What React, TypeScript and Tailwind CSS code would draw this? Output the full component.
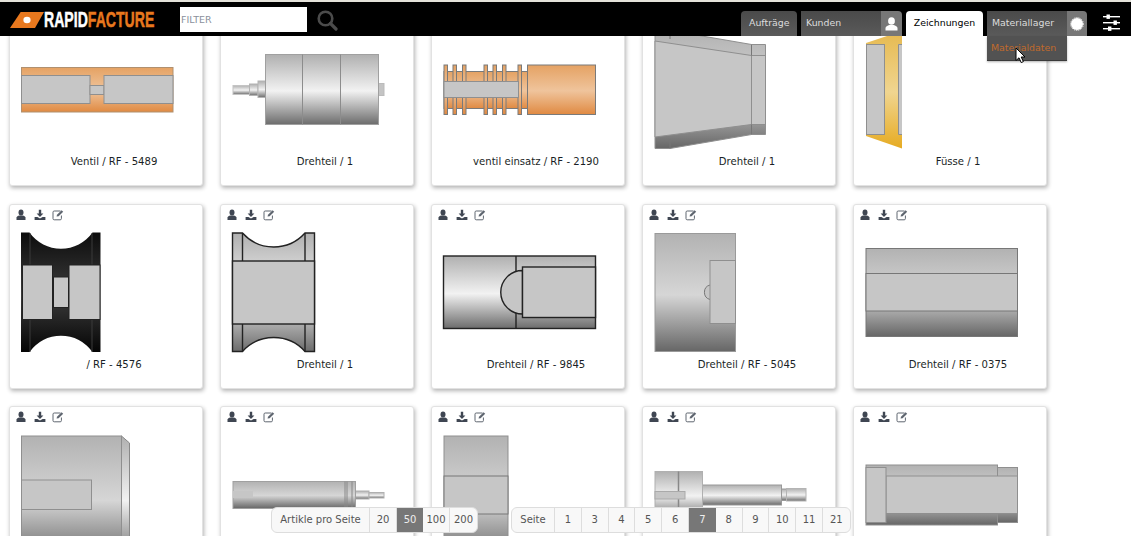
import type { ReactNode } from "react";

const GREY = "#c6c6c6";
const EDGE = "#8f8f8f";
const INK = "#222222";

// Rect by its corners, the drawings below were measured that way
function R({ a, b, c, d, fill = GREY, stroke = EDGE, w = 1 }: { a: number; b: number; c: number; d: number; fill?: string; stroke?: string; w?: number }) {
  return <rect x={a} y={b} width={c - a} height={d - b} fill={fill} stroke={stroke} strokeWidth={w} />;
}

function Defs() {
  const grads: [string, string, string, string][] = [
    ["steel", "#b0b0b0", "#f2f2f2", "#6c6c6c"],
    ["dim", "#b2b2b2", "#d6d6d6", "#666666"],
    ["orange", "#e5a263", "#efc49c", "#e08a42"],
    ["gold", "#e6b94f", "#f0d590", "#e6ab22"],
    ["dark", "#0c0c0c", "#3c3c3c", "#050505"],
  ];
  return (
    <svg className="absolute w-0 h-0">
      <defs>
        {grads.map(([id, top, mid, bottom]) => (
          <linearGradient key={id} id={id} x1="0" y1="0" x2="0" y2="1">
            <stop offset="0" stopColor={top} />
            <stop offset="0.52" stopColor={mid} />
            <stop offset="1" stopColor={bottom} />
          </linearGradient>
        ))}
      </defs>
    </svg>
  );
}

const drawings: ReactNode[] = [
  // row 1
  <g>
    <R a={21.5} b={67.5} c={173} d={112} fill="url(#orange)" stroke="#b0906f" />
    <R a={21.5} b={75.5} c={90} d={103.5} />
    <R a={90} b={85.5} c={104} d={94.5} />
    <R a={104} b={75.5} c={173} d={103.5} />
  </g>,
  <g>
    <R a={233} b={85.5} c={249.5} d={94.5} fill="url(#steel)" stroke="#c4c4c4" />
    <R a={249.5} b={84} c={258} d={95.5} fill="url(#steel)" stroke="#b4b4b4" />
    <R a={258} b={81} c={266} d={97.5} fill="url(#steel)" stroke="#b4b4b4" />
    <R a={377.5} b={83.5} c={384} d={95.5} fill="#c4c4c4" stroke="#bbbbbb" />
    <R a={265.5} b={54.5} c={378.5} d={124.5} fill="url(#steel)" stroke="#a0a0a0" />
    <path d="M302.5 54.5V124.5M340.5 54.5V124.5" stroke="#8c8c8c" fill="none" />
  </g>,
  <g>
    <R a={444} b={71.5} c={527.5} d={108.5} fill="url(#orange)" stroke="#7a7a7a" />
    {[444, 453, 462.5, 484, 493, 502.5, 518].map((x) => (
      <R key={x} a={x} b={65} c={x + 3.5} d={114.5} fill="url(#orange)" stroke="#7a7a7a" />
    ))}
    <R a={444} b={81.5} c={518.5} d={97.5} />
    <R a={527.5} b={65} c={595.5} d={114.5} fill="url(#orange)" stroke="#7a7a7a" />
  </g>,
  <g>
    <path d="M655 30.5H670L751.5 44.5H765.5V134.5H751.5L670 148.5H655Z" fill="url(#dim)" stroke={EDGE} />
    <path d="M655 41L751.5 55.5V124.5L655 137Z" fill={GREY} stroke={EDGE} />
    <R a={751.5} b={55.5} c={765.5} d={124.5} />
    <path d="M670 30.5V39M670 139V148.5M751.5 44.5V55.5M751.5 124.5V134.5" stroke="#777777" fill="none" />
  </g>,
  <g>
    <path d="M866 43L902 31V148.5L866 136Z" fill="url(#gold)" />
    <R a={866.5} b={44.5} c={884.5} d={134.5} />
    <path d="M902 44.5H898.5V134.5H902" fill={GREY} stroke={EDGE} />
  </g>,
  // row 2
  <g>
    <path d="M21 232.5H29.5A38.6 38.6 0 0 0 92.5 232.5H100.5V352H92.5A38.6 38.6 0 0 0 29.5 352H21Z" fill="url(#dark)" />
    <path d="M30 233V352M92 233V352" stroke="#3a3a3a" />
    <R a={22.5} b={265} c={52.5} d={319.5} stroke={INK} />
    <R a={53.5} b={277} c={68.5} d={307.5} stroke={INK} />
    <R a={69} b={265} c={100} d={319.5} stroke={INK} />
  </g>,
  <g>
    <path d="M232.5 233H242.5A42 42 0 0 0 305 233H314.5V351.5H305A42 42 0 0 0 242.5 351.5H232.5Z" fill="url(#steel)" stroke={INK} strokeWidth="1.4" />
    <path d="M242.5 233V351.5M305 233V351.5" stroke={INK} strokeWidth="1.4" />
    <R a={232.5} b={261} c={314.5} d={324} stroke={INK} w={1.4} />
  </g>,
  <g>
    <R a={443.5} b={256} c={595.5} d={328.5} fill="url(#steel)" stroke={INK} w={1.4} />
    <path d="M516 256V328.5" stroke={INK} strokeWidth="1.4" />
    <path d="M522.5 270.5A21.5 21.5 0 0 0 522.5 314Z" fill={GREY} stroke={INK} strokeWidth="1.4" />
    <R a={522.5} b={267} c={595.5} d={317.5} stroke={INK} w={1.4} />
  </g>,
  <g>
    <R a={655} b={233.5} c={735.5} d={351.5} fill="url(#dim)" stroke="#9a9a9a" />
    <path d="M710 285A7.5 7.5 0 0 0 710 299.5" fill={GREY} stroke="#777777" />
    <R a={710} b={260.5} c={735.5} d={323.5} />
  </g>,
  <g>
    <R a={866} b={248.5} c={1017.5} d={336.5} fill="url(#dim)" stroke="#777777" />
    <R a={866} b={273.5} c={1017.5} d={311} stroke="#777777" />
  </g>,
  // row 3
  <g>
    <path d="M121.5 436L129.5 443V560H121.5Z" fill="url(#steel)" stroke="#888888" />
    <R a={21.5} b={436} c={121.5} d={560} fill="url(#dim)" />
    <R a={21.5} b={480} c={91.5} d={509.5} />
  </g>,
  <g>
    <R a={355.5} b={491} c={369} d={499} fill="url(#steel)" stroke="#b0b0b0" />
    <R a={369} b={492.5} c={384} d={498} fill="url(#steel)" stroke="#b0b0b0" />
    <R a={233} b={481.5} c={355.5} d={508.5} fill="url(#dim)" stroke="#a0a0a0" />
    <rect x={233} y={491} width={20} height={7} fill={GREY} />
    <path d="M345 481.5V508.5M347 481.5V508.5M352 481.5V508.5" stroke="#888888" fill="none" />
  </g>,
  <g>
    <R a={444} b={436} c={508} d={560} fill="url(#dim)" />
    <R a={444} b={476} c={508} d={514} stroke="#777777" />
  </g>,
  <g>
    <R a={702.5} b={485} c={781.5} d={505} fill="url(#steel)" stroke="#999999" />
    <R a={781.5} b={489} c={786.5} d={500.5} fill="url(#steel)" stroke="#999999" />
    <R a={786.5} b={488.5} c={806} d={501} fill="url(#steel)" stroke="#b4b4b4" />
    <R a={655} b={471.5} c={702.5} d={518.5} fill="url(#steel)" stroke="#b0b0b0" />
    <path d="M678.5 471.5V518.5" stroke="#888888" strokeWidth="1.5" />
    <R a={655} b={491.5} c={685} d={499} stroke="#aaaaaa" />
  </g>,
  <g>
    <R a={866} b={465} c={997.5} d={525} fill="url(#dim)" />
    <R a={997.5} b={467.5} c={1017.5} d={522.5} fill="url(#dim)" />
    <R a={886} b={476} c={1017.5} d={513.5} />
    <R a={866} b={467.5} c={886} d={522.5} />
  </g>,
];

const labels = [
  "Ventil / RF - 5489",
  "Drehteil / 1",
  "ventil einsatz / RF - 2190",
  "Drehteil / 1",
  "Füsse / 1",
  "/ RF - 4576",
  "Drehteil / 1",
  "Drehteil / RF - 9845",
  "Drehteil / RF - 5045",
  "Drehteil / RF - 0375",
  "",
  "",
  "",
  "",
  "",
];

function CardIcons() {
  return (
    <div className="h-6 flex items-start pt-[4px] pl-[5px] gap-[6.5px]">
      <svg width="12" height="12" viewBox="0 0 12 12" fill="#3f4652">
        <ellipse cx="6" cy="3.4" rx="2.5" ry="3" />
        <path d="M1.5 11V8.6C1.5 7.4 3 6.8 4.3 6.4H7.7C9 6.8 10.5 7.4 10.5 8.6V11Z" />
      </svg>
      <svg width="12" height="12" viewBox="0 0 12 12" fill="#3f4652">
        <path d="M4.8 0.8H7.2V4.5H9.4L6 8L2.6 4.5H4.8Z" />
        <path d="M0.6 8H3.4L6 9.6L8.6 8H11.4V11H0.6Z" />
      </svg>
      <svg width="12" height="12" viewBox="0 0 12 12" fill="none" stroke="#5f6670">
        <path d="M8.5 2H2.2Q1 2 1 3.2V9.6Q1 10.8 2.2 10.8H8.2Q9.4 10.8 9.4 9.6V6.5" />
        <path d="M4.6 7.6L5 5.8L9.6 1.2L11.2 2.8L6.6 7.3Z" fill="#5f6670" stroke="none" />
      </svg>
    </div>
  );
}

function Card({ index }: { index: number }) {
  const x = 9 + (index % 5) * 211;
  const y = [1, 204, 406][Math.floor(index / 5)];
  return (
    <div className="h-[185px] bg-white border border-[#e2e2e2] rounded-[3px] shadow-[1px_2px_4px_rgba(0,0,0,0.3)]">
      <CardIcons />
      <svg width="192" height="128" viewBox="1 25 192 128" className="block">
        <g transform={`translate(${-x} ${-y})`}>{drawings[index]}</g>
      </svg>
      <p className="pt-px pl-4 text-center text-[10.1px] leading-[14px] text-[#1a1f26]">{labels[index]}</p>
    </div>
  );
}

function Logo() {
  return (
    <div className="flex items-center w-[170px] ml-[10px] mt-[2px]">
      <svg width="35" height="16" viewBox="0 0 35 16" className="shrink-0">
        <path d="M0 16L10.7 0H34L25 16Z" fill="#e8781e" />
        <ellipse cx="17" cy="8" rx="3.6" ry="3.2" fill="#ffffff" />
      </svg>
      <span className="block w-[111px] -ml-px origin-left scale-x-[0.64] text-[22px] leading-[16px] font-bold whitespace-nowrap font-['Liberation_Sans',sans-serif] [-webkit-text-stroke:0.5px_currentColor]">
        <span className="text-white">RAPID</span>
        <span className="text-[#e8781e]">FACTURE</span>
      </span>
    </div>
  );
}

function Tab({ label, className }: { label: string; className: string }) {
  return (
    <div className={`h-[25px] flex items-center pl-[5px] rounded-tl-[4px] bg-gradient-to-b from-[#4a4a4a] to-[#5a5a5a] text-[#dddddd] ${className}`}>
      {label}
    </div>
  );
}

function Navbar() {
  return (
    <header className="relative z-10">
      <div className="h-[2px] bg-[#e4e2da]" />
      <div className="h-[34px] bg-black flex items-end text-[9.4px]">
        <div className="self-center flex items-center">
          <Logo />
          <input
            placeholder="FILTER"
            className="w-[127px] h-[25px] bg-white pl-px text-[9.5px] placeholder:text-[#8a909c] outline-none"
          />
          <svg width="22" height="22" viewBox="0 0 22 22" fill="none" stroke="#4b4b4b" className="ml-[9px] mt-[2px]">
            <circle cx="9.5" cy="9.5" r="6.8" strokeWidth="2.6" />
            <path d="M14.5 14.5L20 20" strokeWidth="3.2" strokeLinecap="round" />
          </svg>
        </div>
        <div className="ml-auto flex items-end">
          <Tab label="Aufträge" className="w-[56px] pl-[8px] rounded-tr-[4px] mr-[4px]" />
          <Tab label="Kunden" className="w-[80px] pl-[4px] rounded-tl-none" />
          <div className="h-[25px] w-[21px] mr-[4px] bg-[#777777] rounded-tr-[4px] flex items-center justify-center">
            <svg width="13" height="14" viewBox="0 0 13 14" fill="#ffffff">
              <ellipse cx="6.5" cy="4" rx="3.4" ry="3.8" />
              <path d="M0.5 13.5V11C0.5 9.5 2.6 8.6 4.3 8H8.7C10.4 8.6 12.5 9.5 12.5 11V13.5Z" />
            </svg>
          </div>
          <div className="h-[25px] w-[77px] mr-[4px] bg-white text-black rounded-t-[4px] flex items-center justify-center">
            Zeichnungen
          </div>
          <div className="relative">
            <Tab label="Materiallager" className="w-[80px] pl-[4px] rounded-tl-none" />
            <div className="absolute left-0 top-[25px] w-[80px] h-[25px] pl-[4px] bg-[#525252] border-b border-[#3a3a3a] shadow-[0_1px_2px_rgba(0,0,0,0.3)] text-[#c06a2c] flex items-center">
              Materialdaten
            </div>
            <svg width="12" height="17" viewBox="0 0 12 17" className="absolute left-[28px] top-[36px]">
              <path d="M1 1V13.5L4 10.8L6.2 15.6L8.4 14.6L6.2 10H10Z" fill="#ffffff" stroke="#000000" strokeWidth="1" />
            </svg>
          </div>
          <div className="h-[25px] w-[20px] bg-[#777777] rounded-tr-[4px] flex items-center justify-center">
            <svg width="16" height="16" viewBox="0 0 16 16">
              <circle cx="8" cy="8" r="6" fill="#ffffff" />
              <circle cx="8" cy="8" r="6.4" fill="none" stroke="#ffffff" strokeWidth="1" strokeDasharray="1 1" />
            </svg>
          </div>
          <svg width="18" height="17" viewBox="0 0 18 17" fill="#ffffff" className="ml-[16px] mr-[10px] mb-[5px]">
            <rect x="0" y="2" width="17" height="1.4" />
            <rect x="0" y="8" width="17" height="1.4" />
            <rect x="0" y="14" width="17" height="1.4" />
            <rect x="3.5" y="0.5" width="3.4" height="4.4" />
            <rect x="10.5" y="6.5" width="3.4" height="4.4" />
            <rect x="5" y="12.5" width="3.4" height="4.4" />
          </svg>
        </div>
      </div>
    </header>
  );
}

function Pager({ title, titleWidth, items, active, widths }: { title: string; titleWidth: number; items: string[]; active: string; widths: number[] }) {
  return (
    <div className="flex h-[26px] bg-[#f8f8f8] border border-[#dddddd] rounded-[6px] text-[10px] text-[#555555] overflow-hidden">
      <div className="flex items-center justify-center pb-px border-r border-[#dddddd]" style={{ width: titleWidth }}>
        {title}
      </div>
      {items.map((item, i) => (
        <div
          key={item}
          style={{ width: widths[i] }}
          className={
            item === active
              ? "flex items-center justify-center pb-px bg-[#777777] text-[#eeeeee]"
              : "flex items-center justify-center pb-px border-r last:border-r-0 border-[#dddddd]"
          }
        >
          {item}
        </div>
      ))}
    </div>
  );
}

export default function App() {
  const pages = ["1", "3", "4", "5", "6", "7", "8", "9", "10", "11", "21"];
  return (
    <div className="relative h-[536px] w-[1131px] overflow-hidden bg-white font-['DejaVu_Sans',sans-serif]">
      <Defs />
      <Navbar />
      {/* list is scrolled a little, first row slides under the bar */}
      <main className="-mt-[35px] pl-[9px] grid grid-cols-[repeat(5,194px)] grid-rows-[186px_185px_185px] gap-x-[17px] gap-y-[17px]">
        {labels.map((_, i) => (
          <Card key={i} index={i} />
        ))}
      </main>
      <div className="absolute left-[271px] top-[507px] flex gap-[33px]">
        <Pager title="Artikle pro Seite" titleWidth={98} items={["20", "50", "100", "200"]} active="50" widths={[27, 26, 27, 27]} />
        <Pager title="Seite" titleWidth={43} items={pages} active="7" widths={pages.map(() => 26.8)} />
      </div>
    </div>
  );
}
